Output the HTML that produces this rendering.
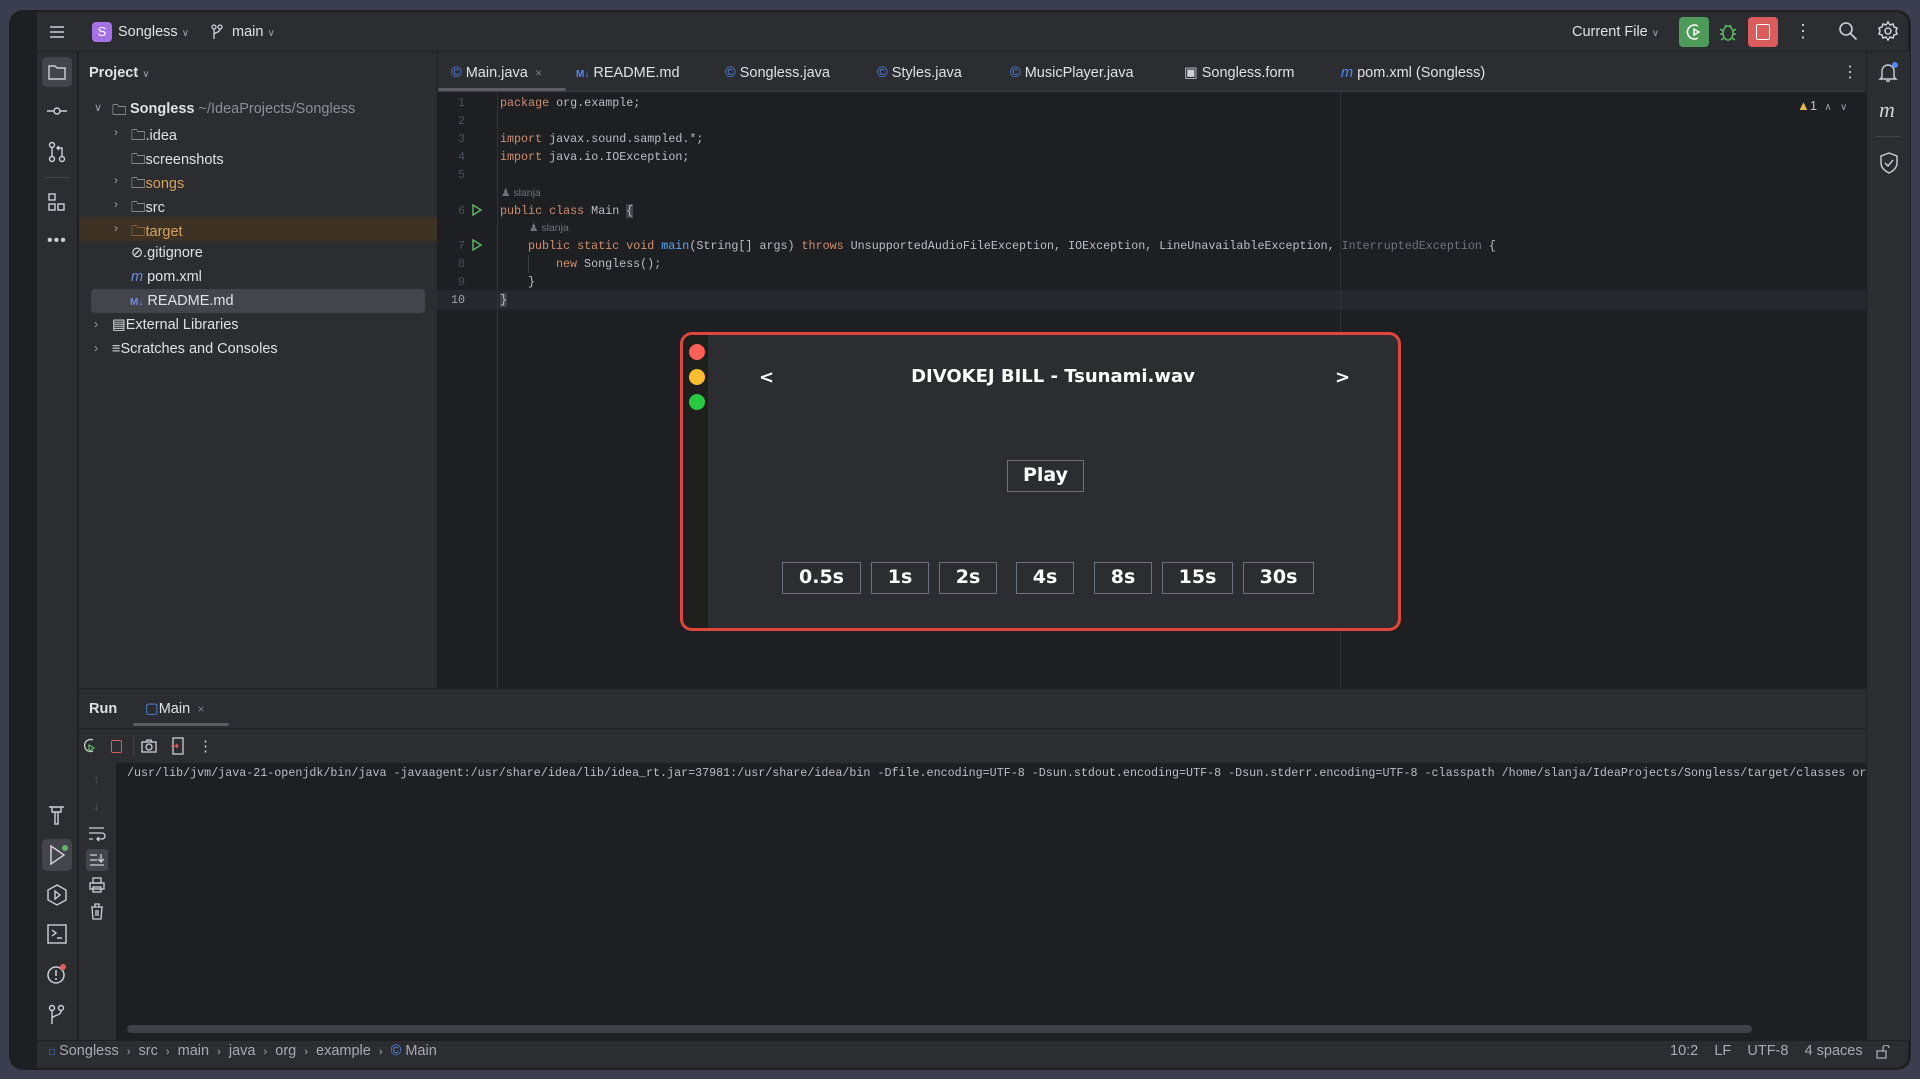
<!DOCTYPE html>
<html><head><meta charset="utf-8"><style>
*{margin:0;padding:0;box-sizing:border-box}
body{width:1920px;height:1079px;background:#3b3e4f;overflow:hidden;font-family:"Liberation Sans",sans-serif;color:#dfe1e5;font-size:14.5px;position:relative}
.a{position:absolute;white-space:nowrap}
.win{position:absolute;left:9px;top:10px;width:1902px;height:1060px;background:#1e1f22;border-radius:14px;overflow:hidden}
.mono{font-family:"Liberation Mono",monospace;font-size:11.7px}
.k{color:#cf8e6d}.g{color:#6f737a}.m{color:#56a8f5}
.tab{position:absolute;top:65px;font-size:14.5px;color:#dfe1e5}
.ic{color:#548af7}
.btn{position:absolute;border:1.5px solid #6b737e;color:#fff;font-weight:bold;font-size:19px;text-align:center;font-family:"DejaVu Sans","Liberation Sans",sans-serif}
svg{position:absolute}
</style></head><body>
<div class="win">
</div>
<!-- title bar -->
<div class="a" style="left:37px;top:12px;width:1871px;height:40px;background:#2b2d30;border-radius:0 12px 0 0"></div>
<div class="a" style="left:37px;top:51px;width:1871px;height:1px;background:#1e1f22"></div>
<svg style="left:48px;top:23px" width="18" height="18" stroke="#ced0d6" stroke-width="1.6"><path d="M2 4h14M2 9h14M2 14h14"/></svg>
<div class="a" style="left:92px;top:22px;width:20px;height:20px;background:#a571e6;border-radius:4px;color:#fff;font-size:13px;text-align:center;line-height:20px">S</div>
<div class="a" style="left:118px;top:24px">Songless <span style="font-size:10px;color:#9da0a8">&#8744;</span></div>
<svg style="left:210px;top:24px" width="14" height="16" stroke="#ced0d6" fill="none" stroke-width="1.3"><circle cx="4" cy="3" r="2"/><circle cx="10" cy="3" r="2"/><path d="M4 5v10M10 5c0 4-6 3-6 6"/></svg>
<div class="a" style="left:232px;top:24px">main <span style="font-size:10px;color:#9da0a8">&#8744;</span></div>
<div class="a" style="left:1572px;top:24px">Current File <span style="font-size:10px;color:#9da0a8">&#8744;</span></div>
<div class="a" style="left:1679px;top:17px;width:30px;height:30px;background:#4e9a58;border-radius:4px"></div>
<svg style="left:1684px;top:22px" width="20" height="20" fill="none" stroke="#fff" stroke-width="1.5"><path d="M14 4a7 7 0 1 0 0 12M10 7l5 3-5 3z"/></svg>
<svg style="left:1718px;top:21px" width="20" height="22" fill="none" stroke="#5fb865" stroke-width="1.5"><ellipse cx="10" cy="12" rx="5" ry="7"/><path d="M2 8l3 2M18 8l-3 2M2 13h3M18 13h-3M3 19l3-2M17 19l-3-2M7 4l2 2M13 4l-2 2"/></svg>
<div class="a" style="left:1748px;top:17px;width:30px;height:30px;background:#db5c5c;border-radius:4px"></div>
<div class="a" style="left:1756px;top:24px;width:14px;height:16px;border:1.5px solid #fff;border-radius:2px"></div>
<div class="a" style="left:1794px;top:22px;color:#ced0d6;font-size:18px;line-height:18px">&#8942;</div>
<svg style="left:1838px;top:21px" width="20" height="20" fill="none" stroke="#ced0d6" stroke-width="1.6"><circle cx="8" cy="8" r="6"/><path d="M12.5 12.5l6 6"/></svg>
<svg style="left:1877px;top:20px" width="22" height="22" fill="none" stroke="#ced0d6" stroke-width="1.5"><circle cx="11" cy="11" r="3"/><path d="M11 2l2 3 3-1 1 3 3 1-1 3 1 3-3 1-1 3-3-1-2 3-2-3-3 1-1-3-3-1 1-3-1-3 3-1 1-3 3 1z"/></svg>

<!-- left strip -->
<div class="a" style="left:37px;top:52px;width:41px;height:988px;background:#2b2d30;border-right:1px solid #1e1f22"></div>
<div class="a" style="left:42px;top:57px;width:30px;height:30px;background:#43454a;border-radius:5px"></div>
<svg style="left:47px;top:62px" width="20" height="20" fill="none" stroke="#ced0d6" stroke-width="1.4"><path d="M2 4h6l2 2h8v11H2z"/></svg>
<svg style="left:46px;top:104px" width="22" height="14" fill="none" stroke="#ced0d6" stroke-width="1.4"><circle cx="11" cy="7" r="3"/><path d="M1 7h7M14 7h7"/></svg>
<svg style="left:47px;top:141px" width="20" height="22" fill="none" stroke="#ced0d6" stroke-width="1.4"><circle cx="5" cy="4" r="2.5"/><circle cx="5" cy="18" r="2.5"/><circle cx="15" cy="18" r="2.5"/><path d="M5 7v8M15 15V7h-5M12 5l-2 2 2 2"/></svg>
<div class="a" style="left:44px;top:177px;width:26px;height:1px;background:#43454a"></div>
<svg style="left:48px;top:193px" width="18" height="20" fill="none" stroke="#ced0d6" stroke-width="1.4"><rect x="1" y="1" width="6" height="6"/><rect x="1" y="11" width="6" height="6"/><rect x="10" y="11" width="6" height="6"/></svg>
<div class="a" style="left:47px;top:232px;color:#ced0d6;font-size:16px;letter-spacing:1px">&#8226;&#8226;&#8226;</div>
<svg style="left:47px;top:804px" width="20" height="22" fill="none" stroke="#ced0d6" stroke-width="1.4"><path d="M2 3h15M5 3v5h9V3M8 8v12h3V8"/></svg>
<div class="a" style="left:42px;top:839px;width:30px;height:32px;background:#43454a;border-radius:5px"></div>
<svg style="left:48px;top:844px" width="22" height="22" fill="none" stroke="#ced0d6" stroke-width="1.5"><path d="M3 2l13 9-13 9z"/><circle cx="17" cy="4" r="3" fill="#5fb865" stroke="none"/></svg>
<svg style="left:46px;top:884px" width="22" height="22" fill="none" stroke="#ced0d6" stroke-width="1.4"><path d="M11 1l9 5v10l-9 5-9-5V6z"/><path d="M9 7l5 4-5 4z"/></svg>
<svg style="left:47px;top:924px" width="20" height="20" fill="none" stroke="#ced0d6" stroke-width="1.4"><rect x="1" y="1" width="18" height="18"/><path d="M5 6l4 3-4 3M10 14h5"/></svg>
<svg style="left:46px;top:963px" width="22" height="22" fill="none" stroke="#ced0d6" stroke-width="1.5"><circle cx="10" cy="12" r="8"/><path d="M10 7v6M10 15v2"/><circle cx="17" cy="4" r="3" fill="#e55b5b" stroke="none"/></svg>
<svg style="left:48px;top:1004px" width="18" height="22" fill="none" stroke="#ced0d6" stroke-width="1.4"><circle cx="4" cy="4" r="2.5"/><circle cx="13" cy="4" r="2.5"/><path d="M4 7v13M13 7c0 5-9 4-9 8"/></svg>

<!-- project panel -->
<div class="a" style="left:79px;top:52px;width:358px;height:636px;background:#2b2d30"></div>
<div class="a" style="left:89px;top:65px;font-weight:bold">Project <span style="font-size:10px;font-weight:normal;color:#9da0a8">&#8744;</span></div>
<div class="a" style="left:79px;top:217px;width:358px;height:24px;background:#3d3223"></div>
<div class="a" style="left:91px;top:289px;width:334px;height:24px;background:#43454a;border-radius:4px"></div>
<div style="font-size:14.5px">
<div class="a" style="left:94px;top:101px;color:#9da0a8;font-size:11px">&#8744;</div>
<div class="a" style="left:112px;top:100px">&#128448;</div>
<div class="a" style="left:130px;top:101px"><b>Songless</b> <span style="color:#8c8f96">~/IdeaProjects/Songless</span></div>
<div class="a" style="left:114px;top:125px;color:#9da0a8;font-size:12px">&#8250;</div>
<div class="a" style="left:131px;top:125px">&#128448;.idea</div>
<div class="a" style="left:131px;top:149px">&#128448;screenshots</div>
<div class="a" style="left:114px;top:173px;color:#9da0a8;font-size:12px">&#8250;</div>
<div class="a" style="left:131px;top:173px">&#128448;<span style="color:#d6a15a">songs</span></div>
<div class="a" style="left:114px;top:197px;color:#9da0a8;font-size:12px">&#8250;</div>
<div class="a" style="left:131px;top:197px">&#128448;src</div>
<div class="a" style="left:114px;top:221px;color:#9da0a8;font-size:12px">&#8250;</div>
<div class="a" style="left:131px;top:221px;color:#d6a15a"><span style="color:#d7885a">&#128448;</span>target</div>
<div class="a" style="left:131px;top:245px">&#8856;.gitignore</div>
<div class="a" style="left:131px;top:269px"><i style="color:#6e8de8">m</i> pom.xml</div>
<div class="a" style="left:130px;top:293px"><span style="color:#6e8de8;font-size:10px;font-weight:bold">M&#8595;</span> README.md</div>
<div class="a" style="left:94px;top:317px;color:#9da0a8;font-size:12px">&#8250;</div>
<div class="a" style="left:112px;top:317px">&#9636;External Libraries</div>
<div class="a" style="left:94px;top:341px;color:#9da0a8;font-size:12px">&#8250;</div>
<div class="a" style="left:112px;top:341px">&#8801;Scratches and Consoles</div>
</div>

<!-- editor tabs -->
<div class="a" style="left:437px;top:52px;width:1429px;height:40px;background:#2b2d30;border-left:1px solid #1e1f22;border-bottom:1px solid #393b40"></div>
<div class="a" style="left:438px;top:88px;width:128px;height:3px;background:#5a5d63;border-radius:2px"></div>
<div class="tab" style="left:451px"><span class="ic">&#169;</span> Main.java <span style="color:#7a7e85;font-size:12px">&nbsp;&#215;</span></div>
<div class="tab" style="left:576px"><span class="ic" style="font-size:10px;font-weight:bold">M&#8595;</span> README.md</div>
<div class="tab" style="left:725px"><span class="ic">&#169;</span> Songless.java</div>
<div class="tab" style="left:877px"><span class="ic">&#169;</span> Styles.java</div>
<div class="tab" style="left:1010px"><span class="ic">&#169;</span> MusicPlayer.java</div>
<div class="tab" style="left:1184px"><span style="color:#ced0d6">&#9635;</span> Songless.form</div>
<div class="tab" style="left:1341px"><i class="ic">m</i> pom.xml (Songless)</div>
<div class="a" style="left:1842px;top:62px;color:#ced0d6;font-size:16px">&#8942;</div>

<!-- editor body -->
<div class="a" style="left:437px;top:92px;width:1429px;height:596px;background:#1e1f22;border-left:1px solid #1e1f22"></div>
<div class="a" style="left:437px;top:290px;width:1429px;height:20px;background:#26282e"></div>
<div class="a" style="left:497px;top:92px;width:1px;height:596px;background:#313338"></div>
<div class="a" style="left:1340px;top:92px;width:1px;height:596px;background:#313338"></div>
<div class="a" style="left:1797px;top:98px;font-size:13px;color:#bcbec4"><span style="color:#e4b84c">&#9650;</span>1 &nbsp;<span style="font-size:10px;color:#9da0a8">&#8743; &nbsp; &#8744;</span></div>
<div class="mono" style="color:#4b5059">
<div class="a" style="left:458px;top:96px">1</div>
<div class="a" style="left:458px;top:114px">2</div>
<div class="a" style="left:458px;top:132px">3</div>
<div class="a" style="left:458px;top:150px">4</div>
<div class="a" style="left:458px;top:168px">5</div>
<div class="a" style="left:458px;top:204px">6</div>
<div class="a" style="left:458px;top:239px">7</div>
<div class="a" style="left:458px;top:257px">8</div>
<div class="a" style="left:458px;top:275px">9</div>
<div class="a" style="left:451px;top:293px;color:#a1a3ab">10</div>
</div>
<svg style="left:471px;top:203px" width="12" height="14" fill="none" stroke="#5fb865" stroke-width="1.4"><path d="M2 2l8 5-8 5z"/></svg>
<svg style="left:471px;top:238px" width="12" height="14" fill="none" stroke="#5fb865" stroke-width="1.4"><path d="M2 2l8 5-8 5z"/></svg>
<div class="mono" style="color:#bcbec4">
<div class="a" style="left:500px;top:96px"><span class="k">package</span> org.example;</div>
<div class="a" style="left:500px;top:132px"><span class="k">import</span> javax.sound.sampled.*;</div>
<div class="a" style="left:500px;top:150px"><span class="k">import</span> java.io.IOException;</div>
<div class="a g" style="left:501px;top:187px;font-family:'Liberation Sans';font-size:10.5px">&#9823; slanja</div>
<div class="a" style="left:500px;top:204px"><span class="k">public class</span> Main <span style="background:#43454a">{</span></div>
<div class="a g" style="left:529px;top:222px;font-family:'Liberation Sans';font-size:10.5px">&#9823; slanja</div>
<div class="a" style="left:528px;top:239px"><span class="k">public static void</span> <span class="m">main</span>(String[] args) <span class="k">throws</span> UnsupportedAudioFileException, IOException, LineUnavailableException, <span class="g">InterruptedException</span> {</div>
<div class="a" style="left:556px;top:257px"><span class="k">new</span> Songless();</div>
<div class="a" style="left:528px;top:275px">}</div>
<div class="a" style="left:500px;top:293px"><span style="background:#43454a">}</span></div>
</div>
<div class="a" style="left:528px;top:255px;width:1px;height:18px;background:#393b40"></div>

<!-- right strip -->
<div class="a" style="left:1866px;top:52px;width:44px;height:988px;background:#2b2d30;border-left:1px solid #1e1f22"></div>
<svg style="left:1878px;top:61px" width="22" height="22" fill="none" stroke="#ced0d6" stroke-width="1.4"><path d="M4 16V10a6 6 0 0 1 12 0v6l2 2H2zM8 20h4"/><circle cx="17" cy="4" r="3" fill="#548af7" stroke="none"/></svg>
<div class="a" style="left:1879px;top:97px;color:#ced0d6;font-size:22px;font-style:italic;font-family:'Liberation Serif'">m</div>
<div class="a" style="left:1876px;top:136px;width:24px;height:1px;background:#43454a"></div>
<svg style="left:1879px;top:152px" width="20" height="22" fill="none" stroke="#ced0d6" stroke-width="1.4"><path d="M10 1l8 3v7c0 5-4 8-8 10-4-2-8-5-8-10V4z"/><path d="M6 11l3 3 5-6"/></svg>

<!-- run panel -->
<div class="a" style="left:79px;top:688px;width:1787px;height:352px;background:#2b2d30;border-top:1px solid #1e1f22"></div>
<div class="a" style="left:89px;top:701px;font-weight:bold">Run</div>
<div class="a" style="left:145px;top:701px"><span class="ic">&#9634;</span>Main <span style="color:#7a7e85;font-size:12px">&nbsp;&#215;</span></div>
<div class="a" style="left:133px;top:723px;width:96px;height:3px;background:#5a5d63;border-radius:2px"></div>
<div class="a" style="left:79px;top:728px;width:1787px;height:1px;background:#1e1f22"></div>
<svg style="left:81px;top:737px" width="16" height="18" fill="none" stroke="#ced0d6" stroke-width="1.3"><path d="M12 3a6 6 0 1 0 0 11"/><path d="M8 8l5 3-5 3z" stroke="#5fb865"/></svg>
<div class="a" style="left:111px;top:740px;width:11px;height:13px;border:1.5px solid #db5c5c;border-radius:2px"></div>
<div class="a" style="left:133px;top:736px;width:1px;height:20px;background:#43454a"></div>
<svg style="left:141px;top:738px" width="16" height="16" fill="none" stroke="#ced0d6" stroke-width="1.3"><rect x="1" y="4" width="14" height="10"/><circle cx="8" cy="9" r="3"/><path d="M5 4l1-2h4l1 2"/></svg>
<svg style="left:171px;top:737px" width="14" height="18" fill="none" stroke="#ced0d6" stroke-width="1.3"><rect x="2" y="1" width="10" height="16"/><path d="M0 9h7M5 7l2 2-2 2" stroke="#db5c5c"/></svg>
<div class="a" style="left:198px;top:737px;color:#ced0d6;font-size:15px">&#8942;</div>
<div class="a" style="left:79px;top:763px;width:37px;height:277px;background:#2b2d30"></div>
<div class="a" style="left:116px;top:763px;width:1750px;height:277px;background:#1e1f22"></div>
<div class="a" style="left:93px;top:772px;color:#55585e;font-size:13px">&#8593;</div>
<div class="a" style="left:93px;top:798px;color:#55585e;font-size:13px">&#8595;</div>
<svg style="left:88px;top:826px" width="18" height="16" fill="none" stroke="#ced0d6" stroke-width="1.3"><path d="M1 2h15M1 7h13a3 3 0 0 1 0 6H9M11 11l-2 2 2 2M1 13h4"/></svg>
<div class="a" style="left:86px;top:849px;width:22px;height:22px;background:#43454a;border-radius:3px"></div>
<svg style="left:89px;top:852px" width="16" height="16" fill="none" stroke="#ced0d6" stroke-width="1.3"><path d="M1 3h7M1 8h7M1 13h14M12 2v8M9 7l3 3 3-3"/></svg>
<svg style="left:89px;top:877px" width="16" height="16" fill="none" stroke="#ced0d6" stroke-width="1.3"><rect x="4" y="1" width="8" height="5"/><rect x="1" y="6" width="14" height="6"/><rect x="4" y="10" width="8" height="5"/></svg>
<svg style="left:90px;top:903px" width="14" height="17" fill="none" stroke="#ced0d6" stroke-width="1.3"><path d="M1 4h12M5 4V1h4v3M2 4l1 12h8l1-12M6 7v6M8 7v6"/></svg>
<div class="a mono" style="left:127px;top:766px;color:#bcbec4;width:1739px;overflow:hidden">/usr/lib/jvm/java-21-openjdk/bin/java -javaagent:/usr/share/idea/lib/idea_rt.jar=37981:/usr/share/idea/bin -Dfile.encoding=UTF-8 -Dsun.stdout.encoding=UTF-8 -Dsun.stderr.encoding=UTF-8 -classpath /home/slanja/IdeaProjects/Songless/target/classes org.example.Main</div>
<div class="a" style="left:127px;top:1025px;width:1625px;height:8px;background:#3f4146;border-radius:4px"></div>

<!-- status bar -->
<div class="a" style="left:37px;top:1040px;width:1871px;height:28px;background:#2b2d30;border-top:1px solid #1e1f22;border-radius:0 0 12px 0"></div>
<div class="a" style="left:49px;top:1043px;font-size:14.5px;color:#a9abb2"><span class="ic" style="font-size:10px">&#9633;</span> Songless &nbsp;<span style="font-size:11px">&#8250;</span>&nbsp; src &nbsp;<span style="font-size:11px">&#8250;</span>&nbsp; main &nbsp;<span style="font-size:11px">&#8250;</span>&nbsp; java &nbsp;<span style="font-size:11px">&#8250;</span>&nbsp; org &nbsp;<span style="font-size:11px">&#8250;</span>&nbsp; example &nbsp;<span style="font-size:11px">&#8250;</span>&nbsp; <span class="ic">&#169;</span> Main</div>
<div class="a" style="left:1670px;top:1043px;color:#a9abb2">10:2 &nbsp;&nbsp; LF &nbsp;&nbsp; UTF-8 &nbsp;&nbsp; 4 spaces</div>
<svg style="left:1876px;top:1045px" width="14" height="14" fill="none" stroke="#a9abb2" stroke-width="1.3"><rect x="1" y="6" width="9" height="7"/><path d="M7 6V3a3 3 0 0 1 6 0"/></svg>

<!-- dialog -->
<div class="a" style="left:680px;top:332px;width:721px;height:299px;background:#2b2d30;border:3px solid #e0463c;border-radius:12px;overflow:hidden">
  <div class="a" style="left:0;top:0;width:25px;height:100%;background:#1f1f1d"></div>
  <div class="a" style="left:6px;top:9px;width:16px;height:16px;border-radius:50%;background:#fe5f57"></div>
  <div class="a" style="left:6px;top:34px;width:16px;height:16px;border-radius:50%;background:#febc2e"></div>
  <div class="a" style="left:6px;top:59px;width:16px;height:16px;border-radius:50%;background:#28c840"></div>
</div>
<div class="a" style="left:759px;top:367px;color:#fff;font-weight:bold;font-size:18px;font-family:'DejaVu Sans',sans-serif">&lt;</div>
<div class="a" style="left:1335px;top:367px;color:#fff;font-weight:bold;font-size:18px;font-family:'DejaVu Sans',sans-serif">&gt;</div>
<div class="a" style="left:853px;top:366px;width:400px;text-align:center;color:#fff;font-weight:bold;font-size:18px;font-family:'DejaVu Sans',sans-serif">DIVOKEJ BILL - Tsunami.wav</div>
<div class="btn" style="left:1007px;top:460px;width:77px;height:32px;line-height:29px">Play</div>
<div class="btn" style="left:782px;top:562px;width:79px;height:32px;line-height:29px">0.5s</div>
<div class="btn" style="left:871px;top:562px;width:58px;height:32px;line-height:29px">1s</div>
<div class="btn" style="left:939px;top:562px;width:58px;height:32px;line-height:29px">2s</div>
<div class="btn" style="left:1016px;top:562px;width:58px;height:32px;line-height:29px">4s</div>
<div class="btn" style="left:1094px;top:562px;width:58px;height:32px;line-height:29px">8s</div>
<div class="btn" style="left:1162px;top:562px;width:71px;height:32px;line-height:29px">15s</div>
<div class="btn" style="left:1243px;top:562px;width:71px;height:32px;line-height:29px">30s</div>
</body></html>
